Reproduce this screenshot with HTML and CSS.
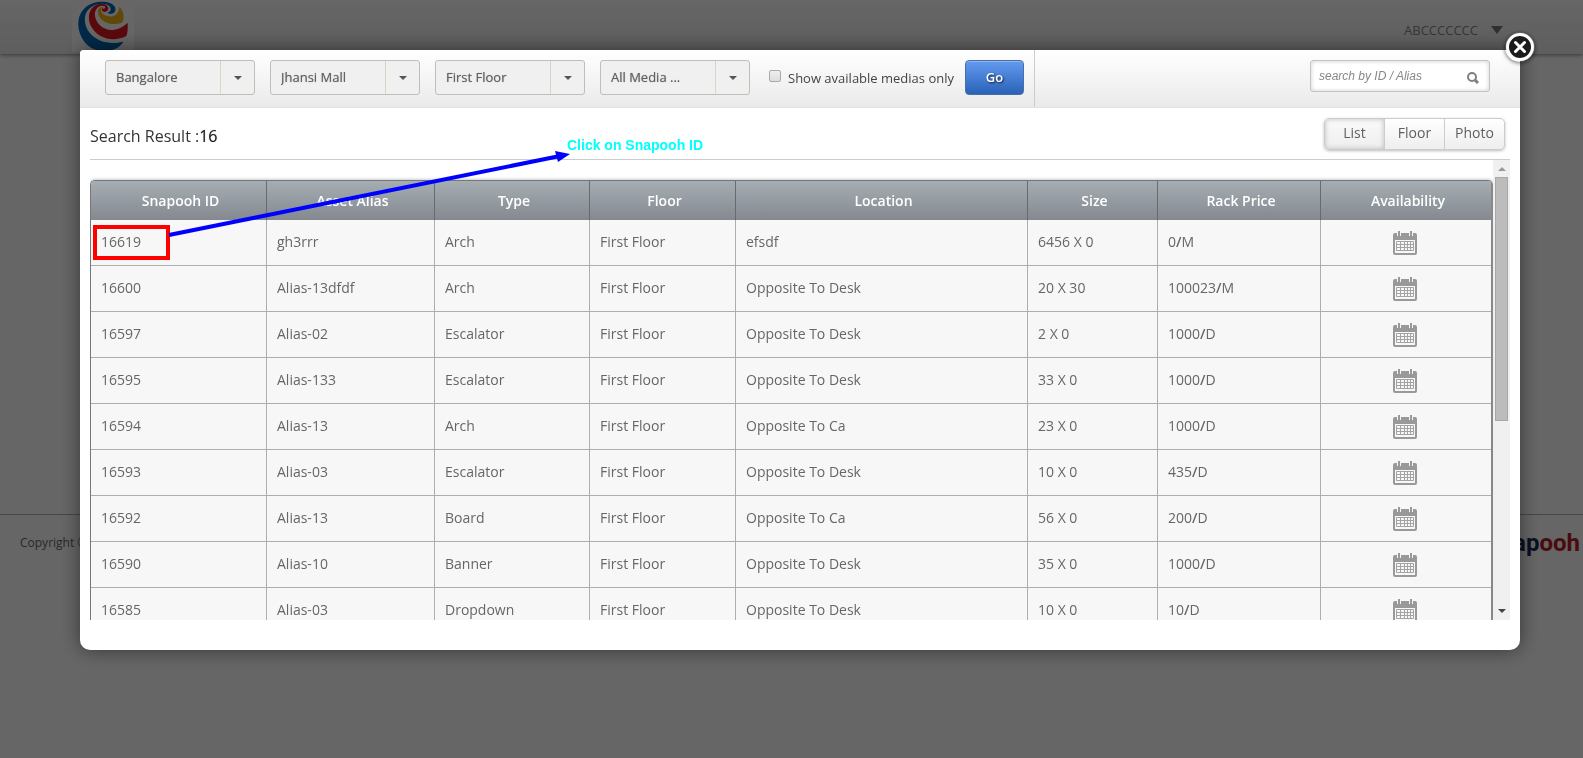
FILE: index.html
```html
<!DOCTYPE html>
<html lang="en">
<head>
<meta charset="utf-8">
<title>Snapooh - Search Result</title>
<link rel="stylesheet" href="styles.css">
</head>
<body>
<svg class="sprite" aria-hidden="true">
  <symbol id="calendar" viewBox="0 0 24 24">
    <path fill="#999" fill-rule="evenodd" d="M2 2h20a2 2 0 0 1 2 2v18a2 2 0 0 1-2 2H2a2 2 0 0 1-2-2V4a2 2 0 0 1 2-2zM2 9v13h20V9z"/>
    <path stroke="#f7f7f7" stroke-width="4" d="M6 0v5M18 0v5"/>
    <path stroke="#999" stroke-width="2" d="M6 0v5M18 0v5"/>
    <path fill="none" stroke="#a3a3a3" d="M3.500 10.500h17v9h-17zM3.500 13.500h17M3.500 16.500h17M7.500 10.500v9M11.500 10.500v9M14.500 10.500v9M17.500 10.500v9"/>
  </symbol>
</svg>

<div class="page">
  <header class="site-header">
    <svg class="site-logo" viewBox="36 0 186 156" role="img" aria-label="Logo">
      <rect x="36" y="0" width="186" height="156" fill="#fff"/>
      <path fill="#0068b4" d="M190 125C170 160 105 166 73 125C42 84 50 25 100 9C122 2 160 4 166 24C169 38 155 47 142 38C155 37 156 20 142 14C120 6 90 15 78 40C62 78 100 145 190 125Z"/>
      <path fill="#e4151f" d="M203 68C204 82 203 98 199 108C160 128 113 115 94 80C77 46 92 12 124 11C144 11 151 27 140 34C131 39 122 32 127 25C132 28 138 24 134 19C119 12 102 28 105 48C110 83 158 111 203 68Z"/>
      <path fill="#f2b518" d="M178 20C190 32 196 52 186 68C160 78 131 70 118 50C108 32 119 17 132 21C121 24 120 34 129 42C143 54 176 55 178 20Z"/>
    </svg>
    <button class="user-menu" type="button">ABCCCCCCC</button>
  </header>
  <main class="site-main"></main>
  <footer class="site-footer">
    <span>Copyright ©</span>
    <span class="brand">snap<span class="brand-end">ooh</span></span>
  </footer>
</div>

<div class="overlay">
  <section class="modal" role="dialog" aria-label="Search result">
    <button class="close" type="button" aria-label="Close">
      <svg viewBox="0 0 30 30"><circle cx="15" cy="15" r="12.500" fill="#1c1c1c" stroke="#fff" stroke-width="3"/><path d="M10.500 10.500l9 9M19.500 10.500l-9 9" stroke="#fff" stroke-width="3" stroke-linecap="round"/></svg>
    </button>
    <form class="toolbar">
      <div class="filters">
        <div class="select"><select aria-label="City"><option>Bangalore</option></select></div>
        <div class="select"><select aria-label="Mall"><option>Jhansi Mall</option></select></div>
        <div class="select"><select aria-label="Floor"><option>First Floor</option></select></div>
        <div class="select"><select aria-label="Media"><option>All Media ...</option></select></div>
        <label class="available"><input type="checkbox"><span>Show available medias only</span></label>
        <button class="go" type="button">Go</button>
      </div>
      <div class="search">
        <input type="text" aria-label="Search by ID or alias" placeholder="search by ID / Alias">
        <svg viewBox="0 0 12 12" aria-hidden="true"><circle cx="5" cy="5" r="4" fill="none" stroke="#808080" stroke-width="2"/><path d="M8 8l3 3" stroke="#808080" stroke-width="3"/></svg>
      </div>
    </form>
    <div class="content">
      <div class="result-bar">
        <h1>Search Result :<strong>16</strong></h1>
        <div class="views">
          <button class="active" type="button">List</button>
          <button type="button">Floor</button>
          <button type="button">Photo</button>
        </div>
      </div>
      <div class="results">
        <div class="table-wrap">
          <table>
            <colgroup><col class="c-id"><col class="c-alias"><col class="c-type"><col class="c-floor"><col><col class="c-size"><col class="c-price"><col class="c-avail"></colgroup>
            <thead><tr><th>Snapooh ID</th><th>Asset Alias</th><th>Type</th><th>Floor</th><th>Location</th><th>Size</th><th>Rack Price</th><th>Availability</th></tr></thead>
            <tbody>
              <tr><td>16619</td><td>gh3rrr</td><td>Arch</td><td>First Floor</td><td>efsdf</td><td>6456 X 0</td><td>0<b>/</b>M</td><td><svg class="cal"><use href="#calendar"/></svg></td></tr>
              <tr><td>16600</td><td>Alias-13dfdf</td><td>Arch</td><td>First Floor</td><td>Opposite To Desk</td><td>20 X 30</td><td>100023<b>/</b>M</td><td><svg class="cal"><use href="#calendar"/></svg></td></tr>
              <tr><td>16597</td><td>Alias-02</td><td>Escalator</td><td>First Floor</td><td>Opposite To Desk</td><td>2 X 0</td><td>1000<b>/</b>D</td><td><svg class="cal"><use href="#calendar"/></svg></td></tr>
              <tr><td>16595</td><td>Alias-133</td><td>Escalator</td><td>First Floor</td><td>Opposite To Desk</td><td>33 X 0</td><td>1000<b>/</b>D</td><td><svg class="cal"><use href="#calendar"/></svg></td></tr>
              <tr><td>16594</td><td>Alias-13</td><td>Arch</td><td>First Floor</td><td>Opposite To Ca</td><td>23 X 0</td><td>1000<b>/</b>D</td><td><svg class="cal"><use href="#calendar"/></svg></td></tr>
              <tr><td>16593</td><td>Alias-03</td><td>Escalator</td><td>First Floor</td><td>Opposite To Desk</td><td>10 X 0</td><td>435<b>/</b>D</td><td><svg class="cal"><use href="#calendar"/></svg></td></tr>
              <tr><td>16592</td><td>Alias-13</td><td>Board</td><td>First Floor</td><td>Opposite To Ca</td><td>56 X 0</td><td>200<b>/</b>D</td><td><svg class="cal"><use href="#calendar"/></svg></td></tr>
              <tr><td>16590</td><td>Alias-10</td><td>Banner</td><td>First Floor</td><td>Opposite To Desk</td><td>35 X 0</td><td>1000<b>/</b>D</td><td><svg class="cal"><use href="#calendar"/></svg></td></tr>
              <tr><td>16585</td><td>Alias-03</td><td>Dropdown</td><td>First Floor</td><td>Opposite To Desk</td><td>10 X 0</td><td>10<b>/</b>D</td><td><svg class="cal"><use href="#calendar"/></svg></td></tr>
            </tbody>
          </table>
        </div>
        <div class="scrollbar" aria-hidden="true">
          <span class="arrow up"></span>
          <span class="thumb"></span>
          <span class="arrow down"></span>
        </div>
      </div>
    </div>
  </section>
</div>

<svg class="pointer" width="600" height="280" aria-hidden="true">
  <rect x="95" y="227" width="73" height="31" fill="none" stroke="#f00" stroke-width="4"/>
  <path d="M169 235L560 156" stroke="#00f" stroke-width="4"/>
  <path d="M570 154L555 151L558 162Z" fill="#00f"/>
</svg>
<p class="note">Click on Snapooh ID</p>
</body>
</html>
```
FILE: styles.css
```css
* { box-sizing: border-box; }
body { margin: 0; background: #fff; color: #333; font: 14px/20px "Open Sans", sans-serif; }
button, input, select { font: inherit; margin: 0; }
.sprite { position: absolute; width: 0; height: 0; }

.page { min-height: 100vh; overflow: hidden; }
.site-header { display: flex; justify-content: space-between; height: 54px; padding: 0 80px 0 72px; background: linear-gradient(#fff, #ebebeb); box-shadow: 0 1px 4px #888; }
.site-logo { width: 62px; height: 52px; }
.user-menu { display: flex; align-items: center; gap: 13px; height: 20px; margin-top: 20px; padding: 0; border: 0; background: none; color: #888; font-size: 13px; }
.user-menu::after { content: ""; border: 6px solid transparent; border-top: 8px solid #777; border-bottom: 0; }
.site-main { min-height: 460px; }
.site-footer { display: flex; justify-content: space-between; padding: 12px 3px 0 20px; border-top: 1px solid #b0b0b0; color: #666; font-size: 12px; line-height: 32px; }
.brand { color: #182858; font: 700 24px/32px Roboto, sans-serif; }
.brand-end { color: #b81c24; }

.overlay { position: fixed; inset: 0; display: flex; padding: 50px 63px 108px 80px; background: rgba(0, 0, 0, .6); }
.modal { position: relative; flex: 1; display: flex; flex-direction: column; min-width: 0; border-radius: 4px 4px 10px 10px; background: #fff; box-shadow: 0 0 20px rgba(0, 0, 0, .5); }
.close { position: absolute; top: -18px; right: -15px; width: 30px; height: 30px; padding: 0; border: 0; border-radius: 50%; background: none; box-shadow: 0 1px 4px rgba(0, 0, 0, .6); }
.close svg { display: block; }

.toolbar { display: flex; justify-content: space-between; padding-right: 30px; border-bottom: 1px solid #e2e2e2; border-radius: 4px 4px 0 0; background: linear-gradient(#fff, #eaeaea); }
.filters { display: flex; gap: 15px; height: 57px; padding: 10px 10px 0 25px; border-right: 1px solid #ccc; }
.select { position: relative; width: 150px; height: 35px; border: 1px solid #bfbfb5; border-radius: 3px; background: #f0f0f0; }
.select select { width: 100%; height: 100%; padding: 0 40px 2px 10px; border: 0; background: none; color: #606060; font-size: 13px; text-shadow: 0 0 1px #999; appearance: none; }
.select::before { content: ""; position: absolute; top: 0; bottom: 0; right: 33px; border-left: 1px solid #d5d5c8; }
.select::after { content: ""; position: absolute; top: 15px; right: 12px; border: 4px solid transparent; border-top-color: #555; border-bottom: 0; }
.available { display: flex; gap: 7px; height: 35px; padding-left: 4px; color: #444; font-size: 13px; line-height: 36px; }
.available input { width: 12px; height: 12px; margin-top: 10px; border: 1px solid #aaa; border-radius: 2px; background: linear-gradient(#eee, #ddd); appearance: none; }
.go { width: 59px; height: 35px; margin-left: -4px; padding: 0 0 2px; border: 1px solid #4a6fa8; border-radius: 4px; background: linear-gradient(#639bf0, #2a62b8); box-shadow: inset 0 1px 0 #8ab4f2; color: #fff; font-size: 13px; font-weight: 600; text-shadow: 1px 1px 2px #123; }
.search { position: relative; width: 180px; padding-top: 10px; }
.search input { width: 100%; height: 32px; padding: 0 36px 0 8px; border: 1px solid #c4c4c4; border-radius: 3px; background: #fff; box-shadow: inset 0 0 4px #ccc; font: italic 12px "Liberation Sans", sans-serif; }
.search input::placeholder { color: #888; }
.search svg { position: absolute; top: 22px; right: 11px; width: 12px; height: 12px; }

.content { flex: 1; display: flex; flex-direction: column; min-height: 0; padding: 0 10px 30px; }
.result-bar { display: flex; align-items: flex-start; justify-content: space-between; padding: 10px 5px 5px 0; border-bottom: 1px solid #ccc; }
h1 { margin: 0; font-size: 16px; font-weight: 400; line-height: 36px; }
h1 strong { color: #222; font-weight: 400; text-shadow: 0 0 1px #888; }
.views { display: flex; border: 1px solid #ccc; border-radius: 5px; background: linear-gradient(#fff, #eee); box-shadow: 0 1px 3px #bbb; overflow: hidden; }
.views button { width: 60px; height: 30px; padding: 0 0 2px; border: 0; background: none; color: #606060; }
.views button + button { border-left: 1px solid #ccc; }
.views .active { width: 59px; background: linear-gradient(#fafafa, #eee); box-shadow: inset 0 0 5px #bbb; }

.results { flex: 1; display: flex; min-height: 0; overflow: hidden; }
.table-wrap { flex: 1; min-width: 0; padding-top: 20px; overflow: hidden; }
table { width: 100%; table-layout: fixed; border: 1px solid #777; border-right: 2px solid #888; border-radius: 5px 5px 0 0; border-spacing: 0; background: #f7f7f7; box-shadow: 0 -1px 3px #ccc; overflow: hidden; }
.c-id { width: 176px; }
.c-alias { width: 168px; }
.c-type { width: 155px; }
.c-floor { width: 146px; }
.c-size { width: 130px; }
.c-price { width: 163px; }
.c-avail { width: 170px; }
thead { background: linear-gradient(#a5adb3, #848990); }
th { height: 39px; padding: 0 0 0 4px; border-right: 1px solid #666b70; color: #fff; font-weight: 600; }
td { height: 46px; padding: 0 10px 2px; border-right: 1px solid #aaafb0; border-bottom: 1px solid #aaafb0; color: #666; }
th:last-child, td:last-child { border-right: 0; }
td:last-child { text-align: center; padding: 0 2px 0 0; }
td b { font-weight: 600; }
.cal { display: block; width: 24px; height: 24px; margin: 0 auto; }

.scrollbar { display: flex; flex-direction: column; align-items: center; width: 17px; background: #f0f0f0; }
.thumb { width: 13px; height: 53%; margin-top: 6px; border: 1px solid #a8a8a8; background: #bcbcbc; }
.arrow { border: 4px solid transparent; }
.up { margin-top: 7px; border-top: 0; border-bottom-color: #999; }
.down { margin: auto 0 7px; border-bottom: 0; border-top-color: #444; }

.pointer { position: absolute; top: 0; left: 0; pointer-events: none; }
.note { position: absolute; top: 135px; left: 567px; margin: 0; color: #0ff; font: 700 14px/20px "Liberation Sans", sans-serif; }
```
